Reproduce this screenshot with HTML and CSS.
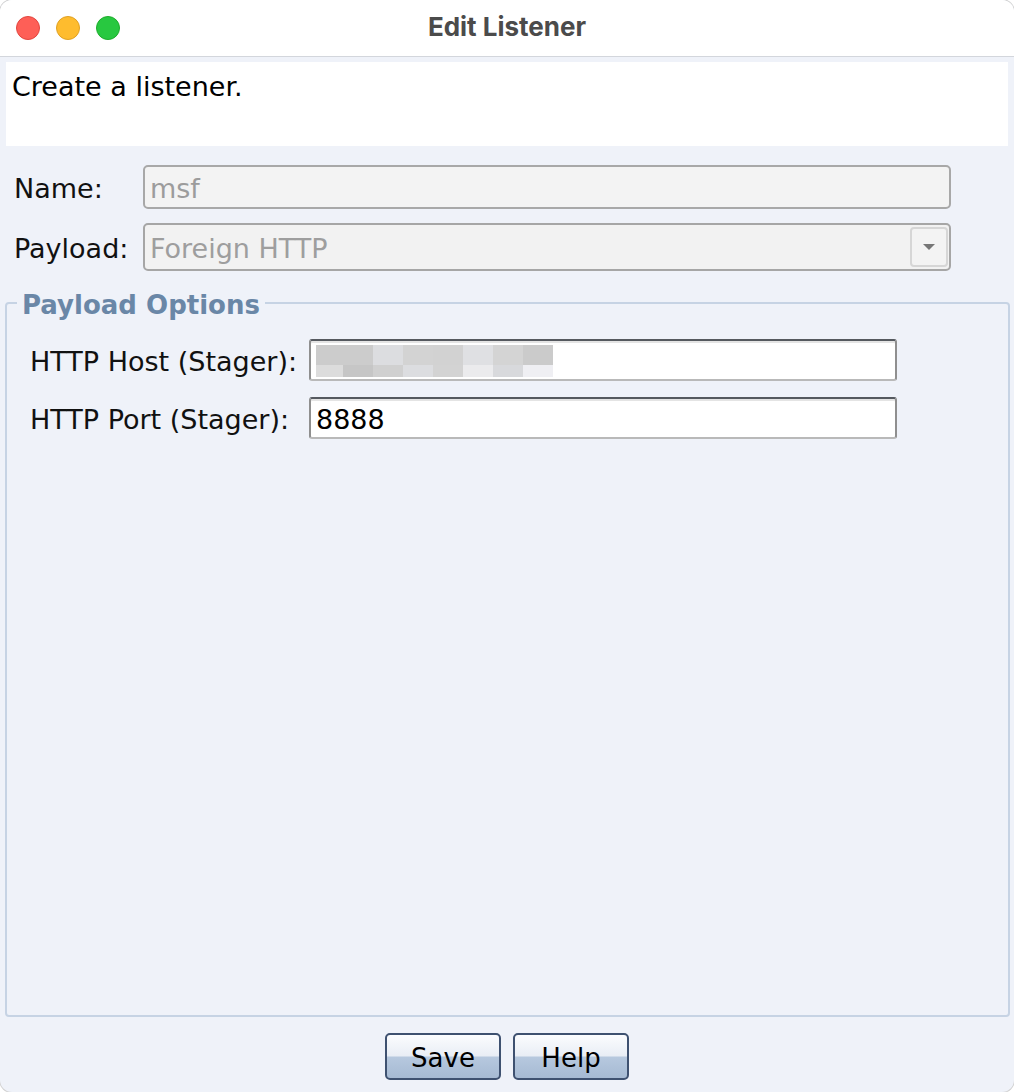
FILE: index.html
```html
<!DOCTYPE html>
<html lang="en">
<head>
  <meta charset="UTF-8" />
  <meta name="viewport" content="width=device-width, initial-scale=1.0"/>
  <title>Edit Listener</title>
  <link rel="stylesheet" href="styles.css">
</head>
<body>

  <div class="window">

    <!-- barra de título estilo macOS -->
    <div class="titlebar">
      <div class="lights">
        <span class="light red"></span>
        <span class="light yellow"></span>
        <span class="light green"></span>
      </div>
      <div class="title">Edit Listener</div>
    </div>

    <div class="description">Create a listener.</div>

    <div class="form main-form">
      <label class="label">Name:</label>
      <div class="field disabled">msf</div>

      <label class="label">Payload:</label>
      <div class="combo">
        <span class="combo-text">Foreign HTTP</span>
        <span class="combo-btn"><span class="arrow"></span></span>
      </div>
    </div>

    <fieldset class="options">
      <legend>Payload Options</legend>
      <div class="form options-form">
        <label class="label">HTTP Host (Stager):</label>
        <div class="field text">
          <!-- host borrado (pixelado) -->
          <div class="pixelated">
            <span class="px" style="background:#cccccc"></span>
            <span class="px" style="background:#cccccc"></span>
            <span class="px" style="background:#dcdde0"></span>
            <span class="px" style="background:#d3d3d3"></span>
            <span class="px" style="background:#d2d2d2"></span>
            <span class="px" style="background:#dfe0e3"></span>
            <span class="px" style="background:#d4d4d4"></span>
            <span class="px" style="background:#cbcbcb"></span>
            <span class="px" style="background:#dcdcdc"></span>
            <span class="px" style="background:#c6c6c6"></span>
            <span class="px" style="background:#d0d0d0"></span>
            <span class="px" style="background:#dcdde0"></span>
            <span class="px" style="background:#d3d3d3"></span>
            <span class="px" style="background:#ebebed"></span>
            <span class="px" style="background:#d8d9dc"></span>
            <span class="px" style="background:#efeff3"></span>
          </div>
        </div>

        <label class="label">HTTP Port (Stager):</label>
        <div class="field text"><span class="value">8888</span></div>
      </div>
    </fieldset>

    <div class="buttons">
      <button class="btn">Save</button>
      <button class="btn">Help</button>
    </div>

  </div>

</body>
</html>
```

FILE: styles.css
```css
html, body {
  margin: 0;
  background: #ffffff;
}

body {
  font-family: "DejaVu Sans", "Liberation Sans", sans-serif;
  font-size: 27px;
  color: #111;
}

.window {
  width: 1014px;
  height: 1092px;
  box-sizing: border-box;
  border-radius: 12px;
  overflow: hidden;
  background: #eff2f9;
  box-shadow: 0 0 0 1px rgba(0,0,0,0.18);
  display: flex;
  flex-direction: column;
}

.titlebar {
  height: 56px;
  flex: none;
  background: #ffffff;
  border-bottom: 1px solid #d3d6dc;
  display: flex;
  align-items: center;
  position: relative;
}

.lights {
  display: flex;
  gap: 16px;
  padding-left: 16px;
}

.light {
  width: 22px;
  height: 22px;
  border-radius: 50%;
  border: 1px solid transparent;
}

.red {
  background: #fe5f57;
  border-color: #e2463f;
}

.yellow {
  background: #febc2e;
  border-color: #e0a123;
}

.green {
  background: #28c840;
  border-color: #1dad2b;
}

.title {
  position: absolute;
  left: 0;
  right: 0;
  top: 12px;
  text-align: center;
  font-family: Inter, "Liberation Sans", sans-serif;
  font-weight: 700;
  font-size: 26px;
  line-height: 30px;
  color: #4b4b4b;
  pointer-events: none;
}

.description {
  flex: none;
  margin: 5px 6px 0;
  height: 84px;
  box-sizing: border-box;
  padding: 10px 6px 0;
  background: #ffffff;
  font-size: 27px;
  line-height: 30px;
  color: #000;
}

.form {
  display: grid;
  align-items: center;
}

.main-form {
  flex: none;
  grid-template-columns: 129px 808px;
  row-gap: 14px;
  padding: 19px 0 0 14px;
}

.label {
  white-space: nowrap;
  line-height: 30px;
  padding-top: 3px;
}

.field {
  box-sizing: border-box;
  display: flex;
  align-items: center;
  padding: 3px 5px 0;
  line-height: 30px;
}

.field.disabled {
  height: 44px;
  background: #f3f3f3;
  border: 2px solid #a8a8a8;
  border-radius: 5px;
  color: #9c9c9c;
}

.combo {
  height: 48px;
  box-sizing: border-box;
  background: #f2f2f2;
  border: 2px solid #a6a6a6;
  border-radius: 5px;
  display: flex;
  align-items: center;
  justify-content: space-between;
  padding: 0 1px 0 5px;
  color: #9e9e9e;
  line-height: 30px;
}

.combo-text {
  padding-top: 4px;
}

.combo-btn {
  width: 38px;
  height: 40px;
  box-sizing: border-box;
  border: 2px solid #d6d6d6;
  border-radius: 4px;
  background: #f3f3f3;
  display: flex;
  align-items: center;
  justify-content: center;
}

.arrow {
  width: 0;
  height: 0;
  border-left: 6px solid transparent;
  border-right: 6px solid transparent;
  border-top: 6px solid #767676;
}

.options {
  flex: 1;
  min-height: 0;
  margin: 15px 4px 0 5px;
  padding: 0;
  border: 2px solid #c6d3e4;
  border-radius: 4px;
}

.options legend {
  margin-left: 10px;
  padding: 4px 5px 0;
  font-weight: bold;
  font-size: 26px;
  line-height: 30px;
  color: #6a87a7;
}

.options-form {
  grid-template-columns: 279px 588px;
  row-gap: 16px;
  padding: 19px 0 0 23px;
}

.field.text {
  height: 42px;
  padding: 0 5px;
  background: #ffffff;
  border: 2px solid;
  border-color: #55595f #8f8f8f #b9b9b9 #8f8f8f;
  border-radius: 3px;
  box-shadow: inset 0 2px 0 #e4e4e4;
  color: #000;
}

.value {
  padding-top: 3px;
}

.pixelated {
  display: grid;
  grid-template-columns: 27px repeat(7, 30px);
  grid-template-rows: 20px 12px;
  margin-top: 2px;
}

.buttons {
  flex: none;
  display: flex;
  justify-content: center;
  gap: 12px;
  padding: 16px 0 12px;
}

.btn {
  width: 116px;
  height: 47px;
  box-sizing: border-box;
  border: 2px solid #3e5170;
  border-radius: 5px;
  background: linear-gradient(#fbfcfe 0%, #e9eef5 48%, #b6c8de 52%, #a6bad3 100%);
  font-family: "DejaVu Sans", "Liberation Sans", sans-serif;
  font-size: 26px;
  color: #000;
  padding: 3px 0 0;
}
```
